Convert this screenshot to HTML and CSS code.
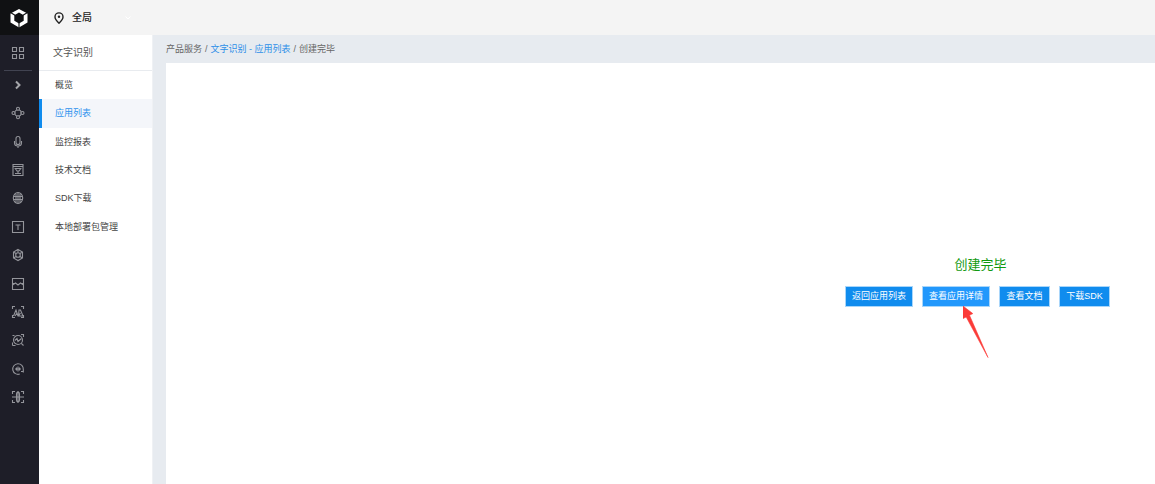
FILE: index.html
```html
<!DOCTYPE html>
<html lang="zh-CN">
<head>
<meta charset="utf-8">
<meta name="viewport" content="width=device-width, initial-scale=1">
<title>文字识别 - 创建完毕</title>
<link rel="stylesheet" href="styles.css">
</head>
<body>
<div class="app">
  <aside class="rail">
    <a class="logo" href="#" aria-label="首页">
      <svg width="18" height="20" viewBox="0 0 18 20">
        <path fill="#fff" fill-rule="evenodd" d="M9 1 17.500 5.500V14.500L9 19.500.5 14.500V5.500zM9 4.600 4.300 7.300V12.700L9 15.600 13.700 12.700V7.300z"/>
        <path d="M.5 4.500 5 7.300M17.500 4.500 13 7.300M9 14.500V20" fill="none" stroke="#101113" stroke-width="1.100"/>
      </svg>
    </a>
    <a class="overview" href="#" aria-label="产品总览">
      <svg class="icon" viewBox="0 0 14 14"><path d="M1.500 1.500h4v4h-4zM8.500 1.500h4v4h-4zM1.500 8.500h4v4h-4zM8.500 8.500h4v4h-4z"/></svg>
    </a>
    <nav class="products" aria-label="产品">
      <a href="#" aria-label="展开"><svg class="icon chevron" viewBox="0 0 14 14"><path d="M5 3.500 8.500 7 5 10.500"/></svg></a>
      <a href="#" aria-label="节点"><svg class="icon" viewBox="0 0 14 14"><circle cx="7" cy="7" r="3.200"/><circle class="node" cx="7" cy="2.800" r="1.500"/><circle class="node" cx="7" cy="11.200" r="1.500"/><circle class="node" cx="2.500" cy="7" r="1.500"/><circle class="node" cx="11.500" cy="7" r="1.500"/></svg></a>
      <a href="#" aria-label="语音"><svg class="icon" viewBox="0 0 14 14"><rect x="5" y="1.500" width="4" height="8" rx="2"/><path d="M3.500 6v2a3.500 3 0 0 0 7 0V6M7 11v2"/></svg></a>
      <a href="#" aria-label="内容"><svg class="icon" viewBox="0 0 14 14"><path d="M2 1.500h10v11H2zM2 3.500h10M3.500 5.500h7M4.500 6l1.500 2h2l1.500-2M7 8v2M4 10.500h6"/></svg></a>
      <a href="#" aria-label="语言"><svg class="icon" viewBox="0 0 14 14"><ellipse cx="7" cy="7" rx="4.700" ry="5.500"/><path d="M7 1.500v11M2.500 5.500h9M2.500 8.500h9M5 2.500v9M9 2.500v9"/></svg></a>
      <a href="#" aria-label="文字识别"><svg class="icon" viewBox="0 0 14 14"><path d="M1.500 1.500h11v11h-11zM4.500 5h5M7 5v5"/></svg></a>
      <a href="#" aria-label="知识图谱"><svg class="icon" viewBox="0 0 14 14"><path d="M7 1.500 11.500 4v6L7 12.500 2.500 10V4zM7 1.500v3M2.500 10 5 8.500M11.500 10 9 8.500M2.500 4 5 5.500M11.500 4 9 5.500"/><circle cx="7" cy="7" r="2.300"/></svg></a>
      <a href="#" aria-label="图像处理"><svg class="icon" viewBox="0 0 14 14"><path d="M1.500 1.500h11v11h-11zM1.500 8l3-2 2.500 2 2.500-2 3 2M1.500 6.500h2M10.500 6.500h2"/></svg></a>
      <a href="#" aria-label="图像识别"><svg class="icon" viewBox="0 0 14 14"><path d="M1.500 4V1.500H4M10 1.500h2.500V4M1.500 10v2.500H4M10 12.500h2.500V10M2.500 11 5 5l2 6M4 11l2-3M7.500 11 8 5h1.500L12 11H7.500l2-3"/></svg></a>
      <a href="#" aria-label="图像搜索"><svg class="icon" viewBox="0 0 14 14"><circle cx="7" cy="7" r="4.500"/><path d="M3.800 7.500 6 5.500l1 3 3.500-3M1.500 12.500h3M1.500 9.500v3M10.300 10.300l2.200 2.200M10 1.500h2.500V4M1.500 2.500h2"/></svg></a>
      <a href="#" aria-label="智能对话"><svg class="icon" viewBox="0 0 14 14"><path d="M8.800 12A5.300 5.300 0 1 1 12.300 7.500V10.500M10 9.500h2.500"/><path d="M5.500 5.500v3M7 4.500v5M8.500 5.500v3M4 7h6"/></svg></a>
      <a href="#" aria-label="人体分析"><svg class="icon" viewBox="0 0 14 14"><path d="M1.500 4V1.500H4M10 1.500h2.500V4M1.500 10v2.500H4M10 12.500h2.500V10M1 7h12M7 1v12M5.500 4.500Q5.500 2 7 2t1.500 2.500v5Q8.500 12 7 12t-1.500-2.500z"/></svg></a>
    </nav>
  </aside>
  <div class="workspace">
    <header class="topbar">
      <button class="region" type="button">
        <svg width="10" height="12" viewBox="0 0 10 12"><path d="M5 11.200Q1 7.300 1 4.900a4 4 0 0 1 8 0Q9 7.300 5 11.200z" fill="none" stroke="#222" stroke-width="1.400"/><circle cx="5" cy="4.800" r="1.200" fill="#222"/></svg>
        <span>全局</span>
        <svg class="caret" width="8" height="6" viewBox="0 0 8 6"><path d="m1.500 1.500 2.500 2.500 2.500-2.500" fill="none" stroke="#fff"/></svg>
      </button>
    </header>
    <div class="body">
      <aside class="sidebar">
        <h2 class="sidebar-title">文字识别</h2>
        <nav class="menu" aria-label="文字识别">
          <a href="#">概览</a>
          <a class="active" href="#" aria-current="page">应用列表</a>
          <a href="#">监控报表</a>
          <a href="#">技术文档</a>
          <a href="#">SDK下载</a>
          <a href="#">本地部署包管理</a>
        </nav>
      </aside>
      <main class="main">
        <nav class="breadcrumb" aria-label="面包屑">
          <span>产品服务</span><span>/</span><a href="#">文字识别 - 应用列表</a><span>/</span><span>创建完毕</span>
        </nav>
        <section class="panel">
          <div class="result">
            <h1 class="result-title">创建完毕</h1>
            <div class="actions">
              <button class="btn" type="button">返回应用列表</button>
              <div class="pointed">
                <button class="btn btn-hover" type="button">查看应用详情</button>
                <svg class="arrow" width="26" height="52" viewBox="0 0 26 52" aria-hidden="true"><path d="M0 0 9.800 7.600 6.500 9.300 25 51.500 3.200 11 0 12.500z" fill="#fb3b38" stroke="#fb3b38" stroke-width=".6"/></svg>
              </div>
              <button class="btn btn-short" type="button">查看文档</button>
              <button class="btn btn-short" type="button">下载SDK</button>
            </div>
          </div>
        </section>
      </main>
    </div>
  </div>
</div>
</body>
</html>
```
FILE: styles.css
```css
* {
  box-sizing: border-box;
}

body {
  margin: 0;
  font-family: "Liberation Sans", "Noto Sans CJK SC", sans-serif;
  font-size: 9px;
  line-height: 14px;
  color: #555;
}

a {
  color: inherit;
  text-decoration: none;
}

button {
  border: 0;
  font: inherit;
  cursor: pointer;
}

.app {
  display: flex;
  min-height: 100vh;
}

.rail {
  flex: none;
  width: 39px;
  background: #1e1e28;
}

.logo,
.overview,
.products a {
  display: flex;
  align-items: center;
  justify-content: center;
  padding-right: 3px;
}

.logo {
  height: 35px;
  padding-right: 2px;
  background: #101113;
}

.overview {
  height: 36px;
  margin: 0 7px 0 4px;
  padding: 0;
  border-bottom: 1px solid #414351;
}

.products {
  display: flex;
  flex-direction: column;
  justify-content: space-between;
  height: 340px;
}

.products a {
  height: 28px;
}

.icon {
  width: 14px;
  height: 14px;
  fill: none;
  stroke: #94959b;
  stroke-width: 1.1;
}

.chevron {
  stroke: #a5a6aa;
  stroke-width: 2;
}

.node {
  fill: #1e1e28;
}

.workspace {
  display: flex;
  flex: 1;
  flex-direction: column;
  min-width: 0;
}

.topbar {
  display: flex;
  align-items: center;
  height: 35px;
  padding-left: 15px;
  background: #f4f4f4;
}

.region {
  display: flex;
  align-items: center;
  gap: 8px;
  padding: 0;
  background: none;
  color: #222;
  font-size: 10px;
  font-weight: 500;
}

.caret {
  margin-left: 24px;
}

.body {
  display: flex;
  flex: 1;
}

.sidebar {
  flex: none;
  width: 114px;
  border-right: 1px solid #eff1f4;
  background: #fff;
}

.sidebar-title {
  height: 36px;
  margin: 0;
  padding-left: 14px;
  border-bottom: 1px solid #e8ebef;
  color: #555;
  font-size: 10px;
  font-weight: 400;
  line-height: 35px;
}

.menu {
  display: grid;
  grid-auto-rows: 1fr;
  height: 170px;
}

.menu a {
  display: flex;
  align-items: center;
  padding-left: 13px;
  border-left: 3px solid transparent;
  color: #444;
}

.menu .active {
  border-left-color: #108cee;
  background: #f4f6fa;
  color: #2d92ee;
}

.main {
  display: flex;
  flex: 1;
  flex-direction: column;
  min-width: 0;
  padding-left: 13px;
  background: #e7ebf0;
}

.breadcrumb {
  display: flex;
  align-items: center;
  gap: 3px;
  height: 28px;
  color: #666;
}

.breadcrumb a {
  color: #2d8fe8;
}

.panel {
  display: flex;
  flex: 1;
  justify-content: flex-end;
  padding: 193px 45px 0 0;
  background: #fff;
}

.result-title {
  margin: 0 0 12px;
  padding-left: 6px;
  color: #119911;
  font-size: 13px;
  font-weight: 400;
  line-height: 18px;
  text-align: center;
}

.actions {
  display: flex;
  gap: 9px;
}

.btn {
  min-width: 68px;
  height: 21px;
  padding: 0 5px;
  border: 1px solid #a9d6fa;
  background: #108cee;
  color: #fff;
  line-height: 19px;
  white-space: nowrap;
}

.btn-hover {
  background: #2298fc;
}

.btn-short {
  min-width: 51px;
}

.pointed {
  position: relative;
}

.arrow {
  position: absolute;
  top: 20px;
  left: 41px;
}
```
